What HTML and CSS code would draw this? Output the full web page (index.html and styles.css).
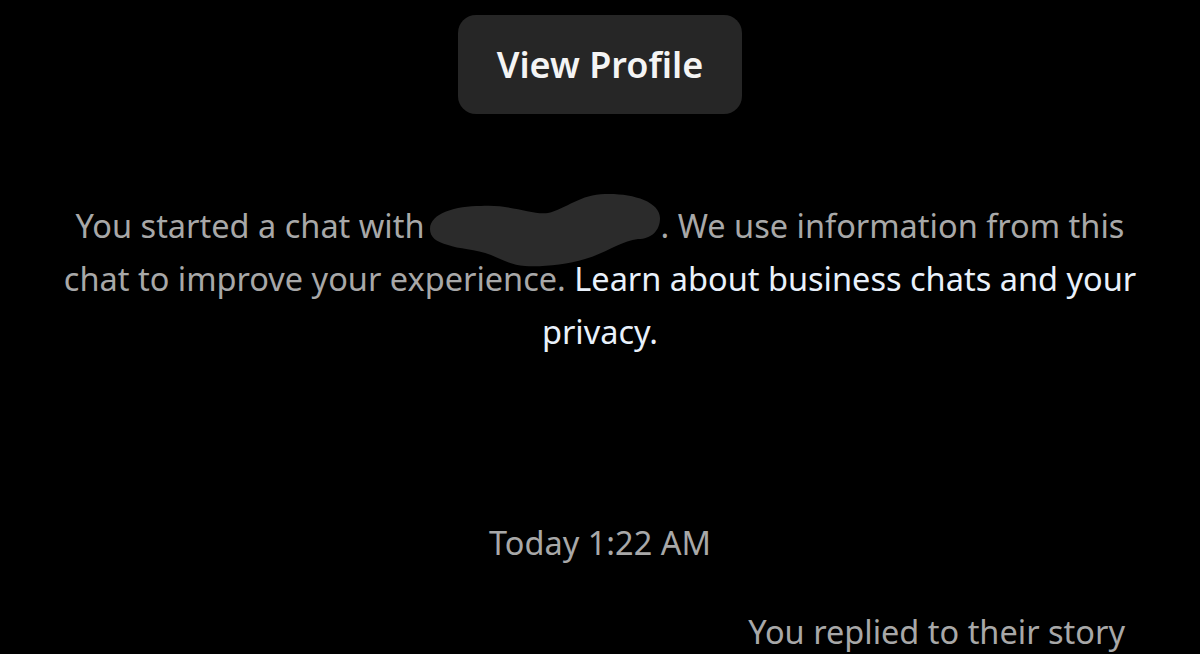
FILE: index.html
```html
<!DOCTYPE html>
<html lang="en">
<head>
    <meta charset="UTF-8">
    <meta name="viewport" content="width=device-width, initial-scale=1.0">
    <title>Chat</title>
    <link rel="stylesheet" href="styles.css">
</head>

<body>

    <div id="chat-screen">
        <!-- Profile button -->
        <button type="button" class="profile-button">View Profile</button>

        <!-- Business chat notice -->
        <p class="notice">
            You started a chat with<span class="redacted"><svg class="redacted-blob" viewBox="0 0 240 80" width="240" height="80"><path d="M4,40 C4,24 30,17 55,17 C85,15 105,26 122,24 C140,20 155,5 179,5 C205,4 234,12 234,29 C234,42 225,50 212,50 C195,52 180,64 159,70 C140,76 115,78 99,77 C85,76 75,70 65,66 C50,60 32,60 22,56 C10,53 4,48 4,40 Z" fill="#2b2b2b"/></svg></span>. We use information from this chat to improve your experience. <a href="#" class="notice-link">Learn about business chats and your privacy.</a>
        </p>

        <!-- Timestamp -->
        <div class="timestamp">Today 1:22 AM</div>

        <!-- Story reply -->
        <div class="story-reply">You replied to their story</div>
    </div>

</body>
</html>
```

FILE: styles.css
```css
/* Global Styles */
* {
    margin: 0;
    padding: 0;
    box-sizing: border-box;
}

body {
    font-family: 'Noto Sans', 'Open Sans', sans-serif;
    background-color: #000;
    color: #a8a8a8;
    height: 100vh;
    overflow: hidden;
}

#chat-screen {
    display: flex;
    flex-direction: column;
    align-items: center;
    padding-top: 15px;
}

/* View Profile */
.profile-button {
    width: 284px;
    height: 99px;
    background: #262626;
    color: #f4f4f4;
    border: none;
    border-radius: 18px;
    font-family: inherit;
    font-size: 36px;
    font-weight: 600;
    cursor: pointer;
}

/* Notice */
.notice {
    width: 1075px;
    margin-top: 85px;
    font-size: 32.5px;
    line-height: 53px;
    text-align: center;
}

.redacted {
    display: inline-block;
    width: 236px;
    height: 1em;
    position: relative;
}

.redacted-blob {
    position: absolute;
    left: 1px;
    top: -17px;
}

.notice-link {
    color: #e9f1fb;
    text-decoration: none;
}

/* Timestamp */
.timestamp {
    margin-top: 165px;
    font-size: 32.5px;
    line-height: 40px;
}

/* Story reply */
.story-reply {
    align-self: flex-end;
    margin-top: 49px;
    margin-right: 75px;
    font-size: 32.5px;
    line-height: 40px;
}
```
